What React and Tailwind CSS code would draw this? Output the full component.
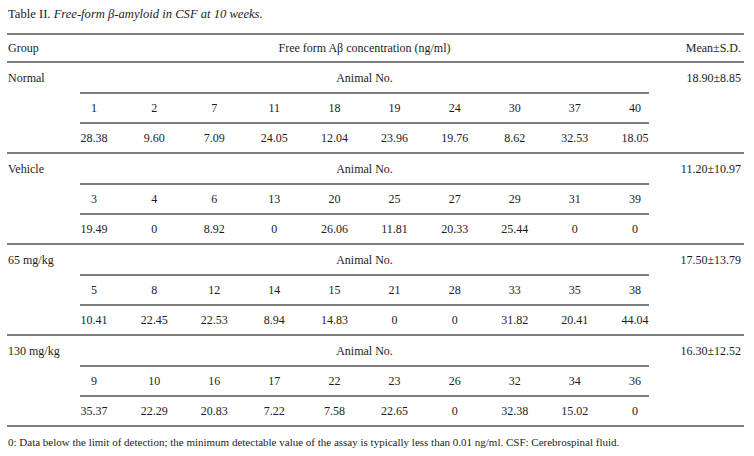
const groups = [
  {
    name: 'Normal',
    mean: '18.90±8.85',
    ids: ['1', '2', '7', '11', '18', '19', '24', '30', '37', '40'],
    vals: ['28.38', '9.60', '7.09', '24.05', '12.04', '23.96', '19.76', '8.62', '32.53', '18.05'],
  },
  {
    name: 'Vehicle',
    mean: '11.20±10.97',
    ids: ['3', '4', '6', '13', '20', '25', '27', '29', '31', '39'],
    vals: ['19.49', '0', '8.92', '0', '26.06', '11.81', '20.33', '25.44', '0', '0'],
  },
  {
    name: '65 mg/kg',
    mean: '17.50±13.79',
    ids: ['5', '8', '12', '14', '15', '21', '28', '33', '35', '38'],
    vals: ['10.41', '22.45', '22.53', '8.94', '14.83', '0', '0', '31.82', '20.41', '44.04'],
  },
  {
    name: '130 mg/kg',
    mean: '16.30±12.52',
    ids: ['9', '10', '16', '17', '22', '23', '26', '32', '34', '36'],
    vals: ['35.37', '22.29', '20.83', '7.22', '7.58', '22.65', '0', '32.38', '15.02', '0'],
  },
];

function GroupBlock({ group }) {
  return (
    <div className="grid grid-cols-[57px_601px_1fr] border-b-2 border-[#7d7d7d]">
      <div className="h-[29px] flex items-center pl-px">{group.name}</div>
      <div>
        <div className="h-[29px] flex items-center justify-center">Animal No.</div>
        <div className="mx-[16px] border-t-2 border-[#7d7d7d]" />
        <div className="grid grid-cols-10 h-[28px] items-center text-center">
          {group.ids.map((id, i) => (
            <div key={i}>{id}</div>
          ))}
        </div>
        <div className="mx-[16px] border-t-2 border-[#7d7d7d]" />
        <div className="grid grid-cols-10 h-[28px] items-center text-center">
          {group.vals.map((v, i) => (
            <div key={i}>{v}</div>
          ))}
        </div>
      </div>
      <div className="h-[29px] flex items-center justify-end pr-[3px]">{group.mean}</div>
    </div>
  );
}

export default function App() {
  return (
    <div className="w-[754px] h-[456px] bg-white px-[7px] text-[12px] leading-[14px] text-[#1c1c1c] font-['Liberation_Serif',serif]">
      <div className="h-[33px] pt-[7px] pl-px text-[12.6px]">
        Table II. <span className="italic">Free-form β-amyloid in CSF at 10 weeks.</span>
      </div>
      <div className="w-[737px] border-t-2 border-[#7d7d7d]">
        <div className="grid grid-cols-[57px_601px_1fr] h-[28px] items-center border-b-2 border-[#7d7d7d]">
          <div className="pl-px">Group</div>
          <div className="text-center">Free form Aβ concentration (ng/ml)</div>
          <div className="text-right pr-[3px]">Mean±S.D.</div>
        </div>
        {groups.map((g) => (
          <GroupBlock key={g.name} group={g} />
        ))}
      </div>
      <div className="pt-[8px] pl-px text-[11px]">
        0: Data below the limit of detection; the minimum detectable value of the assay is typically less than 0.01 ng/ml. CSF: Cerebrospinal fluid.
      </div>
    </div>
  );
}
